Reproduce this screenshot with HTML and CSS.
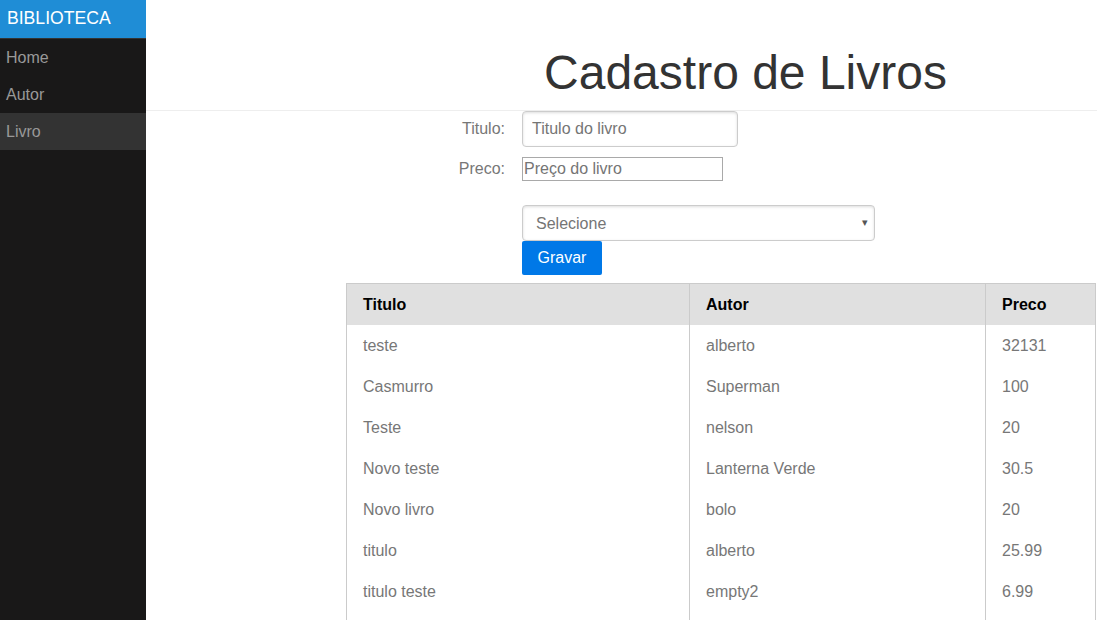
FILE: index.html
```html
<!DOCTYPE html>
<html lang="pt">
<head>
<meta charset="utf-8">
<title>Cadastro de Livros</title>
<link rel="stylesheet" href="styles.css">
</head>
<body>
<div class="layout">
  <nav class="menu">
    <div class="menu-heading">BIBLIOTECA</div>
    <ul class="menu-list">
      <li><a href="#" class="menu-link">Home</a></li>
      <li><a href="#" class="menu-link">Autor</a></li>
      <li class="selected"><a href="#" class="menu-link">Livro</a></li>
    </ul>
  </nav>
  <main class="main">
    <header class="header">
      <h1>Cadastro de Livros</h1>
    </header>
    <div class="content">
      <form class="form">
        <div class="row row-titulo">
          <label class="label" for="titulo">Titulo:</label>
          <input id="titulo" class="input-pure" type="text" placeholder="Titulo do livro">
        </div>
        <div class="row row-preco">
          <label class="label" for="preco">Preco:</label>
          <input id="preco" class="input-plain" type="text" placeholder="Preço do livro">
        </div>
        <div class="row row-select">
          <span class="label"></span>
          <span class="select-wrap">
            <select class="select">
              <option>Selecione</option>
            </select>
            <span class="select-arrow">▾</span>
          </span>
        </div>
        <div class="row row-button">
          <span class="label"></span>
          <button type="button" class="button">Gravar</button>
        </div>
      </form>
      <table class="table">
        <colgroup>
          <col class="col-titulo">
          <col class="col-autor">
          <col class="col-preco">
        </colgroup>
        <thead>
          <tr><th>Titulo</th><th>Autor</th><th>Preco</th></tr>
        </thead>
        <tbody>
          <tr><td>teste</td><td>alberto</td><td>32131</td></tr>
          <tr><td>Casmurro</td><td>Superman</td><td>100</td></tr>
          <tr><td>Teste</td><td>nelson</td><td>20</td></tr>
          <tr><td>Novo teste</td><td>Lanterna Verde</td><td>30.5</td></tr>
          <tr><td>Novo livro</td><td>bolo</td><td>20</td></tr>
          <tr><td>titulo</td><td>alberto</td><td>25.99</td></tr>
          <tr><td>titulo teste</td><td>empty2</td><td>6.99</td></tr>
          <tr><td>&nbsp;</td><td>&nbsp;</td><td>&nbsp;</td></tr>
        </tbody>
      </table>
    </div>
  </main>
</div>
</body>
</html>
```
FILE: styles.css
```css
* { box-sizing: border-box; }

html, body {
  margin: 0;
  padding: 0;
}

body {
  font-family: "Liberation Sans", Arial, sans-serif;
  font-size: 16px;
  color: #777;
  background: #fff;
}

.layout {
  display: flex;
  min-height: 100vh;
}

.menu {
  width: 146px;
  flex: 0 0 146px;
  background: #191818;
}

.menu-heading {
  height: 39px;
  padding: 0 0 0 7px;
  background: #1f8dd6;
  color: #fff;
  font-size: 17.6px;
  line-height: 36px;
  border-bottom: 1px solid #333;
}

.menu-list {
  list-style: none;
  margin: 0;
  padding: 0;
}

.menu-link {
  display: block;
  height: 37px;
  padding: 0 0 0 6px;
  line-height: 37px;
  color: #999;
  text-decoration: none;
}

.selected .menu-link {
  background: #333;
}

.main {
  flex: 1;
  min-width: 0;
}

.header {
  padding: 37px 0 0 248px;
  text-align: center;
  color: #333;
  border-bottom: 1px solid #eee;
}

.header h1 {
  margin: 0;
  padding: 9px 0 10px;
  font-size: 48px;
  line-height: 54px;
  font-weight: normal;
}

.content {
  padding-left: 200px;
}

.form {
  margin: 0;
}

.row {
  display: flex;
  align-items: center;
}

.label {
  width: 159px;
  flex: 0 0 159px;
  margin-right: 17px;
  text-align: right;
  color: #777;
}

.row-titulo {
  height: 36px;
  margin-bottom: 10px;
}

.row-preco {
  height: 24px;
  margin-bottom: 24px;
}

.row-select {
  height: 36px;
}

.input-pure {
  width: 216px;
  height: 36px;
  padding: 8px 9px;
  font: 16px "Liberation Sans", Arial, sans-serif;
  color: #555;
  border: 1px solid #ccc;
  border-radius: 4px;
  box-shadow: inset 0 1px 3px #ddd;
}

.input-pure::placeholder {
  color: #757575;
}

.input-plain {
  width: 201px;
  height: 24px;
  padding: 1px 1px;
  font: 16px "Liberation Sans", Arial, sans-serif;
  color: #555;
  border: 1px solid #a9a9a9;
  border-radius: 0;
}

.input-plain::placeholder {
  color: #757575;
}

.select-wrap {
  position: relative;
  display: inline-block;
}

.select {
  -webkit-appearance: none;
  appearance: none;
  display: block;
  width: 353px;
  height: 36px;
  padding: 0 0 0 13px;
  font: 16px "Liberation Sans", Arial, sans-serif;
  color: #757575;
  background: #fff;
  border: 1px solid #ccc;
  border-radius: 4px;
  box-shadow: inset 0 1px 3px #ddd;
}

.select-arrow {
  position: absolute;
  right: 7px;
  top: 9px;
  font-size: 11px;
  line-height: 16px;
  color: #555;
  pointer-events: none;
}

.button {
  height: 34px;
  width: 80px;
  padding: 0;
  font: 16px "Liberation Sans", Arial, sans-serif;
  color: #fff;
  background: #0078e7;
  border: none;
  border-radius: 2px;
}

.table {
  margin-top: 8px;
  border-collapse: collapse;
  border-spacing: 0;
  border: 1px solid #cbcbcb;
  width: 750px;
  table-layout: fixed;
}

.col-titulo { width: 343px; }
.col-autor { width: 296px; }
.col-preco { width: 110px; }

.table th,
.table td {
  padding: 8px 16px;
  line-height: 25px;
  text-align: left;
  border-left: 1px solid #cbcbcb;
  white-space: nowrap;
  overflow: hidden;
}

.table thead {
  background: #e0e0e0;
  color: #000;
  vertical-align: bottom;
}

.table th {
  font-weight: bold;
}

.table td {
  color: #777;
}
```
